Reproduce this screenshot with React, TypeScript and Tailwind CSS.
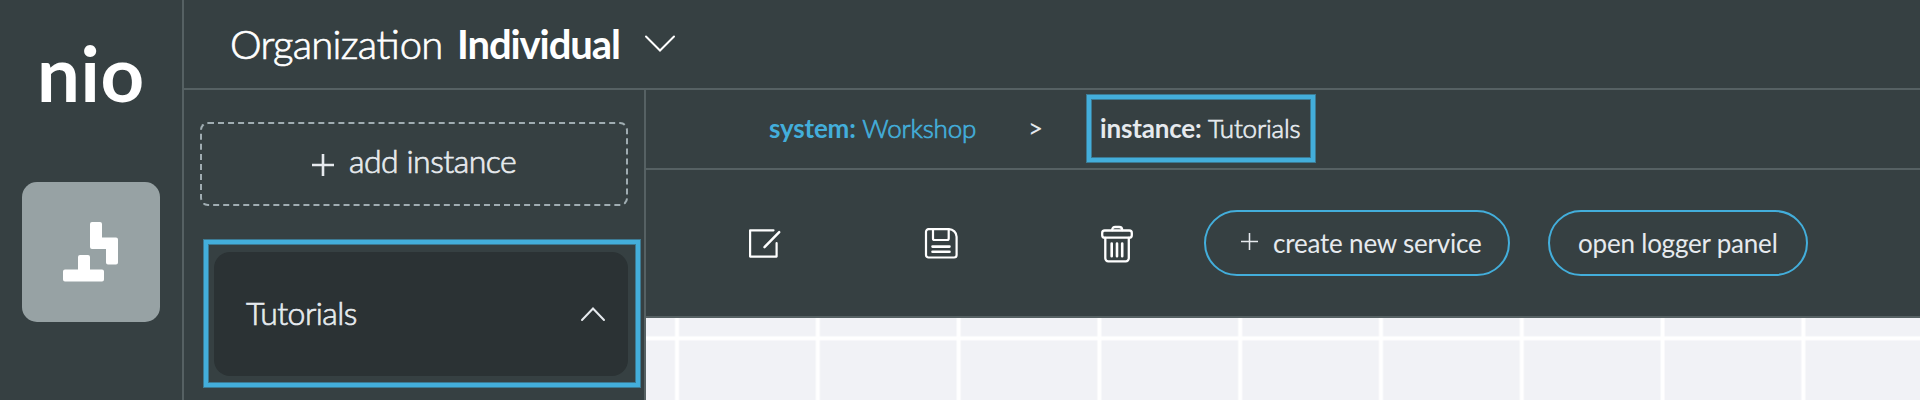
import React from "react";

const Chevron = ({ className, d, box }: { className: string; d: string; box: string }) => (
  <svg className={className} viewBox={box} fill="none" stroke="currentColor" strokeWidth="2" strokeLinecap="round">
    <path d={d} />
  </svg>
);

const BlocksIcon = () => (
  <svg className="h-[60px] w-[56px]" viewBox="0 0 56 60" fill="#fff">
    <path d="M29 0h8a2 2 0 0 1 2 2v13.500h14a2 2 0 0 1 2 2v23a2 2 0 0 1-2 2h-8a2 2 0 0 1-2-2V27H29a2 2 0 0 1-2-2V2a2 2 0 0 1 2-2z" />
    <path d="M17 33h8a2 2 0 0 1 2 2v12.500h12a2 2 0 0 1 2 2V57.500a2 2 0 0 1-2 2H2a2 2 0 0 1-2-2V49.500a2 2 0 0 1 2-2h13V35a2 2 0 0 1 2-2z" />
  </svg>
);

const EditIcon = () => (
  <svg className="h-[40px] w-[40px]" viewBox="0 0 40 40" fill="none" stroke="#fff" strokeWidth="2.2" strokeLinecap="round" strokeLinejoin="round">
    <path d="M28.500 7.300H5.100v26.300h26.500V20.200" />
    <path d="M34.200 9.200L19.500 24.100" strokeWidth="2.500" />
  </svg>
);

const SaveIcon = () => (
  <svg className="h-[40px] w-[40px]" viewBox="0 0 40 40" fill="none" stroke="#fff" strokeWidth="2.200" strokeLinecap="round" strokeLinejoin="round">
    <path d="M7.500 6.200h20.500c4 0 7.600 3.400 7.600 7.500v18.300a2.500 2.500 0 0 1-2.500 2.500H7.500A2.500 2.500 0 0 1 5 32V8.700a2.500 2.500 0 0 1 2.500-2.500z" />
    <path d="M12 6.500v9a1.500 1.500 0 0 0 1.500 1.500h12.700a1.500 1.500 0 0 0 1.500-1.500v-9" />
    <path d="M11.500 23.600h17M11.500 28.800h17" strokeWidth="2.600" />
  </svg>
);

const TrashIcon = () => (
  <svg className="h-[40px] w-[40px]" viewBox="0 0 40 40" fill="none" stroke="#fff" strokeWidth="2.300" strokeLinecap="round" strokeLinejoin="round">
    <path d="M15.200 7.200c0-2.600 1.400-3.200 3-3.200h4c1.600 0 3 .6 3 3.200" />
    <rect x="5.200" y="7.500" width="29.600" height="7.200" rx="2.500" />
    <path d="M8.300 15v20.300a3 3 0 0 0 3 3h17.500a3 3 0 0 0 3-3V15" />
    <path d="M14.700 20.500v12.700M20 20.500v12.700M25.200 20.500v12.700" strokeWidth="2.600" />
  </svg>
);

const Plus = ({ className, width }: { className: string; width: number }) => (
  <svg className={className} viewBox="0 0 22 22" fill="none" stroke="currentColor" strokeWidth={width}>
    <path d="M0 11h22M11 0v22" />
  </svg>
);

const frame =
  "pointer-events-none absolute border-4 border-[#43aedb] shadow-[0_0_0_1px_#3c7a93,inset_0_0_0_1px_#3c7a93]";

const thin = "font-light [-webkit-text-stroke:0.7px_currentColor]";

export default function App() {
  return (
    <div className="flex h-[400px] w-[1920px] overflow-hidden bg-[#364042] font-['Lato',sans-serif] text-[#e6eaee]">
      <aside className="flex w-[184px] shrink-0 flex-col border-r-2 border-[#566163] pl-[22px]">
        <div className="h-[182px] pt-[31px] pl-[15px] text-[76px] leading-[84px] font-bold tracking-[0.7px] text-white">nio</div>
        <div className="flex h-[140px] w-[138px] items-center justify-center rounded-[15px] bg-[#97a2a4]">
          <BlocksIcon />
        </div>
      </aside>

      <div className="flex min-w-0 flex-1 flex-col">
        <header className="flex h-[90px] shrink-0 items-center border-b-2 border-[#566163] pl-[46px] whitespace-nowrap text-white">
          <span className={`w-[211px] text-[40px] leading-[88px] tracking-[-0.75px] ${thin}`}>
            Organiza<span className="tracking-normal">ti</span>on
          </span>
          <span className="ml-[16px] w-[163px] text-[40px] leading-[88px] font-bold tracking-[-1.1px]">Individual</span>
          <Chevron className="ml-[24px] h-[18px] w-[32px]" box="0 0 32 18" d="M2 1.500L16 15.500L30 1.500" />
        </header>

        <div className="flex min-h-0 flex-1">
          <nav className="relative w-[462px] shrink-0 border-r-2 border-[#566163] pt-[32px] pl-[16px]">
            <button className="flex h-[84px] w-[428px] items-center rounded-[8px] border-2 border-dashed border-[#a0adb2] pl-[110px] text-[32px] whitespace-nowrap">
              <Plus className="mt-[2px] h-[22px] w-[22px]" width={2.6} />
              <span className={`mb-[7px] ml-[15px] tracking-[-0.5px] ${thin}`}>add instance</span>
            </button>
            <div className="mt-[46px] ml-[14px] flex h-[124px] w-[414px] items-center justify-between rounded-[16px] bg-[#2b3234] pr-[22px] pl-[32px]">
              <span className={`mb-[2px] text-[32px] tracking-[-0.55px] ${thin}`}>Tutorials</span>
              <Chevron className="h-[16px] w-[26px]" box="0 0 26 16" d="M2 14L13 2.500L24 14" />
            </div>
            <div className={`${frame} top-[150px] left-[20px] h-[147px] w-[436px]`} />
          </nav>

          <main className="flex min-w-0 flex-1 flex-col">
            <div className="flex h-[80px] shrink-0 items-center border-b-2 border-[#566163] pl-[123px] pb-[2px] text-[26px] tracking-[-0.18px] whitespace-nowrap">
              <span className="w-[259px] text-[#43aedb]"><b>system:</b> <span className={thin}>Workshop</span></span>
              <span className="w-[72px]">&gt;</span>
              <span className="relative">
                <b>instance:</b> <span className={thin}>Tutorials</span>
                <span className={`${frame} top-[-14px] left-[-13px] h-[67px] w-[228px]`} />
              </span>
            </div>

            <div className="flex h-[148px] shrink-0 items-center border-b-2 border-[#566163] pl-[99px] whitespace-nowrap">
              <EditIcon />
              <div className="ml-[136px]"><SaveIcon /></div>
              <div className="ml-[136px]"><TrashIcon /></div>
              <button className="ml-[67px] flex h-[66px] w-[306px] items-center rounded-full border-2 border-[#43aedb] pl-[35px] text-[26px] tracking-[-0.2px]">
                <Plus className="mb-[3px] h-[17px] w-[17px]" width={2} />
                <span className="ml-[15px]">create new service</span>
              </button>
              <button className="ml-[38px] flex h-[66px] w-[260px] items-center rounded-full border-2 border-[#43aedb] pl-[28px] text-[26px] tracking-[-0.2px]">
                open logger panel
              </button>
            </div>

            <div className="flex-1 bg-[#f1f2f6] bg-[linear-gradient(to_right,transparent_0px,#fff_1px,#fff_4px,transparent_5px),linear-gradient(to_bottom,transparent_0px,#fff_1px,#fff_4px,transparent_5px)] bg-size-[140.8px_140.8px] bg-position-[28.5px_17.8px]" />
          </main>
        </div>
      </div>
    </div>
  );
}
